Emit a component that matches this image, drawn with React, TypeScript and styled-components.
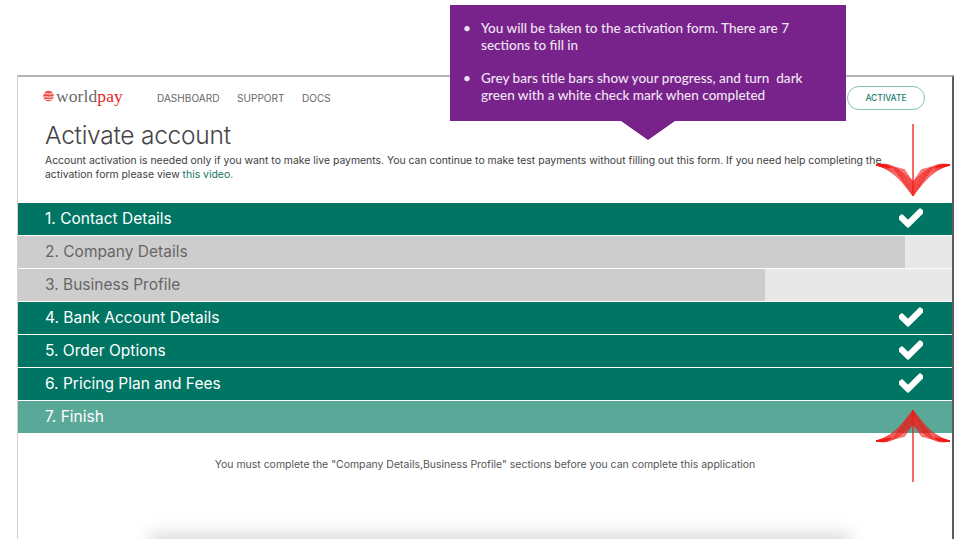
import React from "react";
import styled, { createGlobalStyle } from "styled-components";
import { FaCheck } from "react-icons/fa";

const Global = createGlobalStyle`
  html, body { margin: 0; padding: 0; background: #fff; }
  body { width: 965px; height: 546px; overflow: hidden; font-family: "Inter", "Liberation Sans", sans-serif; }
`;

const Page = styled.div`
  position: relative;
  width: 965px;
  height: 546px;
  padding-top: 75px;
  box-sizing: border-box;
  overflow: hidden;
  background: #fff;
`;

const Frame = styled.main`
  position: relative;
  margin-left: 17px;
  width: 937px;
  height: 464px;
  box-sizing: border-box;
  border-top: 2px solid #b4b4b4;
  border-left: 1px solid #d8cfc8;
  border-right: 2px solid #5c5c5c;
  overflow: hidden;
  display: flex;
  flex-direction: column;

  & > * {
    flex: none;
  }
`;

const TopBar = styled.header`
  display: flex;
  align-items: center;
  height: 34px;
  margin-top: 4px;
  padding: 0 27px 0 24px;
`;

const Logo = styled.div`
  display: flex;
  align-items: center;
  gap: 1px;
  width: 115px;
  font-family: "Liberation Serif", serif;
  font-size: 17.5px;
  letter-spacing: 0.1px;
  color: #6a6a6a;
  position: relative;
  top: -2px;
`;

const LogoRed = styled.span`
  color: #e8251f;
`;

const Nav = styled.nav`
  display: flex;
  gap: 17.5px;
`;

const NavLink = styled.span`
  font-size: 10px;
  color: #666;
  letter-spacing: 0.05px;
`;

const ActivateButton = styled.button`
  margin-left: auto;
  width: 78px;
  height: 24px;
  padding: 0;
  background: #fff;
  border: 1px solid #80c2b4;
  border-radius: 12px;
  color: #1a7d6b;
  font-family: inherit;
  font-size: 8.5px;
  font-weight: 500;
`;

const Intro = styled.section`
  padding: 0 60px 0 27px;
  height: 88px;
`;

const Title = styled.h1`
  margin: 4px 0 0;
  font-size: 24.5px;
  line-height: 32px;
  font-weight: 300;
  color: #444;
  letter-spacing: -0.25px;
`;

const Description = styled.p`
  margin: 3px 0 0;
  font-size: 10.42px;
  line-height: 14px;
  color: #3d3d3d;
`;

const VideoLink = styled.span`
  color: #157463;
`;

const Sections = styled.div`
  display: flex;
  flex-direction: column;
  gap: 1px;
`;

const tones = {
  done: { bg: "#007563", fg: "#fff" },
  progress: { bg: "#e8e8e8", fg: "#666" },
  ready: { bg: "#5aa897", fg: "#fff" },
};

const Bar = styled.div<{ $tone: keyof typeof tones; $progress?: number }>`
  display: flex;
  align-items: center;
  justify-content: space-between;
  height: 32px;
  box-sizing: border-box;
  padding: 0 29px 2px 27px;
  font-size: 15.5px;
  color: ${(p) => tones[p.$tone].fg};
  background: ${(p) =>
    p.$progress
      ? `linear-gradient(to right, #cdcdcd ${p.$progress}%, #e8e8e8 ${p.$progress}%)`
      : tones[p.$tone].bg};
`;

const Notice = styled.p`
  margin: 25px 0 0;
  text-align: center;
  font-size: 10.48px;
  line-height: 14px;
  color: #555;
`;

const Shadow = styled.div`
  margin: 62px 0 0 132px;
  width: 700px;
  height: 30px;
  background: #d8d8d8;
  filter: blur(9px);
`;

const Callout = styled.aside`
  position: absolute;
  left: 450px;
  top: 5px;
  width: 396px;
  height: 116px;
  box-sizing: border-box;
  padding: 15px 40px 0 31px;
  background: #78228b;
  color: #efe4f2;
  font-family: "Lato", sans-serif;
  font-size: 13.55px;
  line-height: 17px;
  font-weight: 500;

  &::after {
    content: "";
    position: absolute;
    left: 171px;
    top: 116px;
    border-style: solid;
    border-width: 19px 27px 0;
    border-color: #78228b transparent transparent;
  }
`;

const CalloutItem = styled.div`
  position: relative;
  margin-bottom: 16px;

  &::before {
    content: "•";
    position: absolute;
    left: -18px;
  }
`;

const ArrowSvg = styled.svg<{ $top: number }>`
  position: absolute;
  left: 870px;
  top: ${(p) => p.$top}px;
`;

function FanArrow({ up, top }: { up?: boolean; top: number }) {
  // Drawn pointing down with its tip at (43, 73), then flipped when pointing up.
  const curves = Array.from({ length: 12 }, (_, i) => i / 11);
  return (
    <ArrowSvg $top={top} width="86" height="76" viewBox="0 0 86 76" fill="none">
      <g transform={up ? "translate(0 76) scale(1 -1)" : undefined} stroke="#f01a16">
        <line x1="43" y1="1" x2="43" y2="73" strokeWidth="1.3" />
        {curves.map((t) => (
          <g key={t} strokeWidth="0.6">
            <path d={`M6 42 C ${16 + t * 2} ${40 + t * 6}, ${24 + t * 2} ${40 + t * 10}, 43 ${59 + t * 14}`} />
            <path d={`M80 42 C ${70 - t * 2} ${40 + t * 6}, ${62 - t * 2} ${40 + t * 10}, 43 ${59 + t * 14}`} />
            <path d={`M${22 + t * 12} ${43 + t * 3} L43 ${73 - t * 14}`} />
            <path d={`M${64 - t * 12} ${43 + t * 3} L43 ${73 - t * 14}`} />
          </g>
        ))}
        <path d="M6 42 C 12 40.5 18 41 22 45 C 16 44.5 11 43.5 6 42Z" fill="#f01a16" strokeWidth="0.4" />
        <path d="M80 42 C 74 40.5 68 41 64 45 C 70 44.5 75 43.5 80 42Z" fill="#f01a16" strokeWidth="0.4" />
      </g>
    </ArrowSvg>
  );
}

function Globe() {
  return (
    <svg width="13" height="12" viewBox="0 0 13 12" fill="none">
      <circle cx="6.5" cy="6" r="5.3" fill="#ee4a44" />
      <path d="M0.8 4.2 C4 2.5 8 5.5 12 2.8 M0.8 7.4 C4 5.8 8.4 8.6 12.4 5.8 M2.8 10 C5.4 8.6 8 10.4 10.6 9" stroke="#fff" strokeWidth="1" />
    </svg>
  );
}

const sections: { label: string; tone: keyof typeof tones; progress?: number; check?: boolean }[] = [
  { label: "1. Contact Details", tone: "done", check: true },
  { label: "2. Company Details", tone: "progress", progress: 95 },
  { label: "3. Business Profile", tone: "progress", progress: 80 },
  { label: "4. Bank Account Details", tone: "done", check: true },
  { label: "5. Order Options", tone: "done", check: true },
  { label: "6. Pricing Plan and Fees", tone: "done", check: true },
  { label: "7. Finish", tone: "ready" },
];

export default function App() {
  return (
    <Page>
      <Global />
      <Frame>
        <TopBar>
          <Logo>
            <Globe />
            <span>
              world<LogoRed>pay</LogoRed>
            </span>
          </Logo>
          <Nav>
            <NavLink>DASHBOARD</NavLink>
            <NavLink>SUPPORT</NavLink>
            <NavLink>DOCS</NavLink>
          </Nav>
          <ActivateButton>ACTIVATE</ActivateButton>
        </TopBar>
        <Intro>
          <Title>Activate account</Title>
          <Description>
            Account activation is needed only if you want to make live payments. You can continue to make test payments without filling out this form. If you need help completing the activation form please view <VideoLink>this video</VideoLink>.
          </Description>
        </Intro>
        <Sections>
          {sections.map((s) => (
            <Bar key={s.label} $tone={s.tone} $progress={s.progress}>
              <span>{s.label}</span>
              {s.check && <FaCheck size={24} color="#fff" stroke="#fff" strokeWidth={30} />}
            </Bar>
          ))}
        </Sections>
        <Notice>You must complete the "Company Details,Business Profile" sections before you can complete this application</Notice>
        <Shadow />
      </Frame>
      <Callout>
        <CalloutItem>You will be taken to the activation form. There are 7 sections to fill in</CalloutItem>
        <CalloutItem>Grey bars title bars show your progress, and turn&nbsp; dark green with a white check mark when completed</CalloutItem>
      </Callout>
      <FanArrow top={123} />
      <FanArrow up top={407} />
    </Page>
  );
}
